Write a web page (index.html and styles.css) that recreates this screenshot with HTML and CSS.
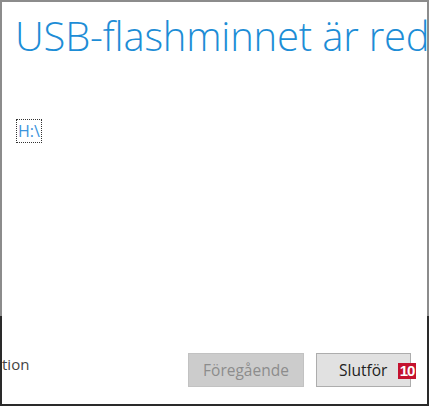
FILE: index.html
```html
<!DOCTYPE html>
<html>
<head>
<meta charset="utf-8">
<link rel="stylesheet" href="styles.css">
</head>
<body>
<div class="window">
  <div class="upper">
    <h1 class="title">USB-flashminnet är red</h1>
    <div class="drive"><span class="drive-label">H:\</span></div>
  </div>
  <div class="lower">
    <span class="link">tion</span>
    <div class="buttons">
      <button class="btn btn-disabled">Föregående</button>
      <button class="btn btn-primary">Slutför</button>
      <span class="badge">10</span>
    </div>
  </div>
</div>
</body>
</html>
```
FILE: styles.css
```css
* { box-sizing: border-box; }
html, body { margin: 0; padding: 0; background: #fff; }
body { font-family: "Open Sans", "Noto Sans", sans-serif; }
.window {
  width: 429px;
  height: 406px;
  display: flex;
  flex-direction: column;
  overflow: hidden;
}
.upper {
  height: 316px;
  border-top: 2px solid #8c8c8c;
  border-left: 2px solid #8c8c8c;
  border-right: 2px solid #8c8c8c;
  overflow: hidden;
  padding: 10px 0 0 13px;
}
.title {
  margin: 0;
  font-weight: 300;
  font-size: 40px;
  line-height: 48px;
  color: #1d8dd6;
  white-space: nowrap;
  letter-spacing: -0.2px;
}
.drive {
  margin-top: 60px;
  padding-left: 2px;
}
.drive-label {
  display: inline-block;
  font-size: 16px;
  line-height: 22px;
  color: #3b93dc;
  outline: 1px dotted #333;
  padding: 0 1px;
}
.lower {
  flex: 1;
  border-left: 2px solid #2a2a2a;
  border-right: 2px solid #2a2a2a;
  border-bottom: 2px solid #2a2a2a;
  display: flex;
  align-items: flex-start;
  padding-top: 37px;
}
.link {
  font-size: 15px;
  color: #444;
  margin-top: 1px;
}
.buttons {
  margin-left: auto;
  display: flex;
  align-items: center;
  position: relative;
  margin-right: 16px;
}
.btn {
  font-family: "Open Sans", "Noto Sans", sans-serif;
  font-size: 15.5px;
  height: 34px;
  padding: 0;
  border-radius: 0;
}
.btn-disabled {
  width: 116px;
  background: #cccccc;
  border: 1px solid #c2c2c2;
  color: #8c8c8c;
}
.btn-primary {
  width: 95px;
  margin-left: 12px;
  background: #e1e1e1;
  border: 1px solid #adadad;
  color: #222;
  text-align: left;
  padding-left: 22px;
}
.badge {
  position: absolute;
  right: -5px;
  top: 10px;
  width: 18px;
  height: 16px;
  background: #c4122f;
  color: #fff;
  font-weight: bold;
  font-family: "Liberation Sans", sans-serif;
  font-size: 15px;
  line-height: 16px;
  text-align: center;
  letter-spacing: -1px;
}
```
